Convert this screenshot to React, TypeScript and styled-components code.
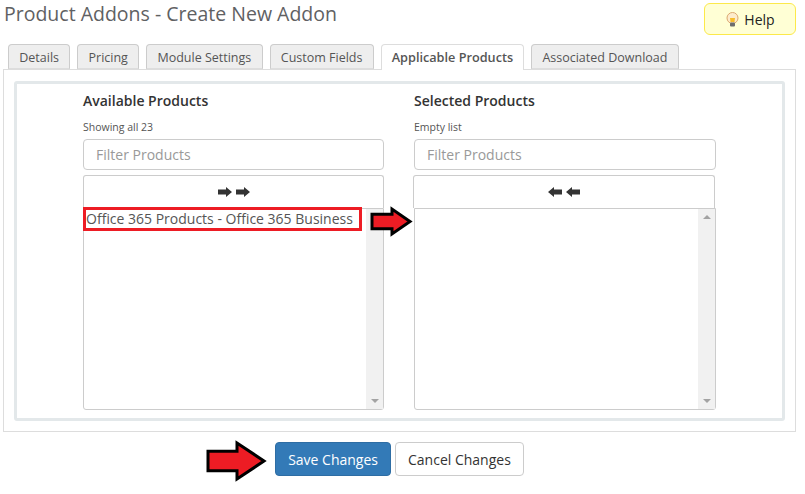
import styled, { createGlobalStyle } from 'styled-components'
import React from 'react'

const GlobalStyle = createGlobalStyle`
  html, body {
    margin: 0;
    padding: 0;
    background: #fff;
    font-family: "Open Sans", "Liberation Sans", sans-serif;
    color: #333;
  }
`

const Page = styled.div`
  width: 805px;
  height: 494px;
  overflow: hidden;
  box-sizing: border-box;
  padding: 0 9px 0 3px;
`

const TitleRow = styled.div`
  display: flex;
  justify-content: space-between;
  align-items: flex-start;
  height: 44px;
`

const Title = styled.h1`
  margin: 0 0 0 1px;
  font-size: 19.5px;
  line-height: 28px;
  font-weight: 400;
  color: #5f6163;
`

const HelpButton = styled.a`
  display: flex;
  align-items: center;
  justify-content: center;
  gap: 4px;
  box-sizing: border-box;
  width: 92px;
  height: 32px;
  margin-top: 3px;
  background: #ffffd5;
  border: 1px solid #fce94a;
  border-radius: 6px;
  font-size: 14px;
  color: #222;
`

const Tabs = styled.ul`
  display: flex;
  gap: 7px;
  list-style: none;
  margin: 0;
  padding: 0 0 0 5px;
  height: 26px;
  position: relative;
  z-index: 1;
`

const Tab = styled.li<{ $active?: boolean }>`
  box-sizing: border-box;
  height: ${p => (p.$active ? '26px' : '25px')};
  padding: 0 ${p => (p.$active ? '10px' : '10.25px')};
  border: 1px solid ${p => (p.$active ? '#ddd' : '#ccc')};
  border-bottom: ${p => (p.$active ? 'none' : '1px solid #ddd')};
  border-radius: 4px 4px 0 0;
  background: ${p => (p.$active ? '#fff' : '#eee')};
  font-size: ${p => (p.$active ? '12.7px' : '12.5px')};
  line-height: 25px;
  font-weight: ${p => (p.$active ? 600 : 400)};
  color: #555;
`

const Panel = styled.div`
  box-sizing: border-box;
  width: 793px;
  height: 363px;
  margin-top: -1px;
  padding: 11px 10px;
  border: 1px solid #ddd;
`

const InnerBox = styled.div`
  box-sizing: border-box;
  height: 340px;
  border: 3px solid #e3e8ea;
  border-radius: 3px;
  padding: 6px 0 0 66px;
  display: flex;
  gap: 30px;
`

const Column = styled.div<{ $width: number }>`
  width: ${p => p.$width}px;
  display: flex;
  flex-direction: column;
`

const Heading = styled.div`
  font-size: 14px;
  line-height: 22px;
  font-weight: 600;
  color: #333;
`

const Note = styled.div`
  margin-top: 5px;
  font-size: 10.5px;
  line-height: 20px;
  color: #555;
`

const FilterInput = styled.input`
  box-sizing: border-box;
  width: 100%;
  height: 31px;
  margin-top: 2px;
  padding: 0 12px;
  border: 1px solid #ccc;
  border-radius: 4px;
  font-family: inherit;
  font-size: 14px;
  color: #555;
  outline: none;

  &::placeholder {
    color: #999;
    opacity: 1;
  }
`

const MoveBar = styled.div<{ $shift?: boolean }>`
  box-sizing: border-box;
  width: 100%;
  height: 33px;
  margin-top: 5px;
  margin-left: ${p => (p.$shift ? '-1px' : '0')};
  border: 1px solid #ccc;
  border-bottom: none;
  border-radius: 3px 3px 0 0;
  display: flex;
  align-items: center;
  justify-content: center;
  gap: 4px;
`

const ListBox = styled.div`
  box-sizing: border-box;
  height: 202px;
  border: 1px solid #ccc;
  border-radius: 0 0 3px 3px;
  display: flex;
  justify-content: space-between;
`

const Option = styled.div`
  font-size: 14px;
  line-height: 20px;
  padding: 0 0 0 2px;
  white-space: nowrap;
  color: #555;
`

const Scrollbar = styled.div`
  width: 17px;
  background: #f1f1f1;
  display: flex;
  flex-direction: column;
  justify-content: space-between;
  align-items: center;
  padding: 6px 0;
  box-sizing: border-box;
`

const ScrollUp = styled.div`
  width: 0;
  height: 0;
  border-left: 4px solid transparent;
  border-right: 4px solid transparent;
  border-bottom: 4px solid #a3a3a3;
`

const ScrollDown = styled(ScrollUp)`
  transform: rotate(180deg);
`

const Actions = styled.div`
  display: flex;
  justify-content: center;
  gap: 4px;
  margin-top: 10px;
`

const Button = styled.button<{ $primary?: boolean }>`
  box-sizing: border-box;
  height: 34px;
  padding: 0 12px;
  border: 1px solid ${p => (p.$primary ? '#2e6da4' : '#ccc')};
  border-radius: 4px;
  background: ${p => (p.$primary ? '#337ab7' : '#fff')};
  color: ${p => (p.$primary ? '#fff' : '#333')};
  font-family: inherit;
  font-size: 14px;
`

const Callout = styled.svg<{ $x: number; $y: number }>`
  position: absolute;
  left: ${p => p.$x}px;
  top: ${p => p.$y}px;
`

const RedFrame = styled.div`
  position: absolute;
  left: 83px;
  top: 207px;
  width: 279px;
  height: 24px;
  box-sizing: border-box;
  border: 3px solid #ed1c24;
`

const Arrow = ({ dir }: { dir: 'left' | 'right' }) => (
  <svg width="14" height="10" viewBox="0 0 14 10" style={dir === 'left' ? { transform: 'scaleX(-1)' } : undefined}>
    <path d="M0 2.500h8V0l6 5-6 5V7.500H0z" fill="#333" />
  </svg>
)

const Bulb = () => (
  <svg width="15" height="15" viewBox="0 0 15 15">
    <circle cx="7.500" cy="6" r="5.500" fill="#fdeccb" stroke="#dba870" />
    <path d="M5 6h5L9.500 10h-4z" fill="#f7bd2b" />
    <rect x="5" y="10.500" width="5" height="4" rx="1" fill="#6d6d6d" />
  </svg>
)

const BigArrow = ({ w, h }: { w: number; h: number }) => {
  const mid = h / 2
  const neck = w * 0.5
  return (
    <path
      d={`M2 ${h * 0.27}H${neck}V3L${w - 4} ${mid}L${neck} ${h - 3}V${h * 0.73}H2Z`}
      fill="#ed1c24"
      stroke="#000"
      strokeWidth="3"
    />
  )
}

export default function App() {
  return (
    <Page>
      <GlobalStyle />
      <TitleRow>
        <Title>Product Addons - Create New Addon</Title>
        <HelpButton>
          <Bulb />
          Help
        </HelpButton>
      </TitleRow>
      <Tabs>
        <Tab>Details</Tab>
        <Tab>Pricing</Tab>
        <Tab>Module Settings</Tab>
        <Tab>Custom Fields</Tab>
        <Tab $active>Applicable Products</Tab>
        <Tab>Associated Download</Tab>
      </Tabs>
      <Panel>
        <InnerBox>
          <Column $width={301}>
            <Heading>Available Products</Heading>
            <Note>Showing all 23</Note>
            <FilterInput placeholder="Filter Products" />
            <MoveBar>
              <Arrow dir="right" />
              <Arrow dir="right" />
            </MoveBar>
            <ListBox>
              <Option>Office 365 Products - Office 365 Business</Option>
              <Scrollbar>
                <ScrollUp />
                <ScrollDown />
              </Scrollbar>
            </ListBox>
          </Column>
          <Column $width={302}>
            <Heading>Selected Products</Heading>
            <Note>Empty list</Note>
            <FilterInput placeholder="Filter Products" />
            <MoveBar $shift>
              <Arrow dir="left" />
              <Arrow dir="left" />
            </MoveBar>
            <ListBox>
              <span />
              <Scrollbar>
                <ScrollUp />
                <ScrollDown />
              </Scrollbar>
            </ListBox>
          </Column>
        </InnerBox>
      </Panel>
      <Actions>
        <Button $primary>Save Changes</Button>
        <Button>Cancel Changes</Button>
      </Actions>
      <RedFrame />
      <Callout $x={370} $y={206} width="44" height="31">
        <BigArrow w={44} h={31} />
      </Callout>
      <Callout $x={206} $y={440} width="62" height="42">
        <BigArrow w={62} h={42} />
      </Callout>
    </Page>
  )
}
